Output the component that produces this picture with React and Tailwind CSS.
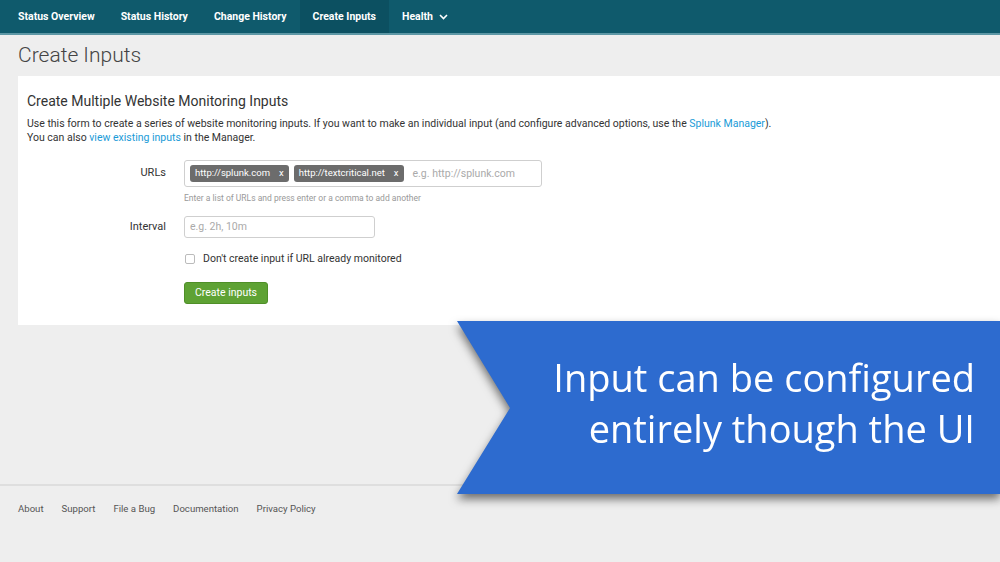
import React from "react";

export default function App() {
  const nav = ["Status Overview", "Status History", "Change History", "Create Inputs"];
  const footer = ["About", "Support", "File a Bug", "Documentation", "Privacy Policy"];
  return (
    <div className="relative w-[1000px] h-[562px] overflow-hidden bg-[#eeeeee] flex flex-col" style={{ fontFamily: "Roboto, 'Liberation Sans', sans-serif" }}>
      {/* Nav */}
      <div className="h-[35px] bg-[#0f5a6c] border-b-2 border-[#5d97a5] flex items-stretch pl-[5px] shrink-0">
        {nav.map((n) => (
          <div key={n} className={`px-[13px] flex items-center text-[10.5px] font-bold text-white ${n === "Create Inputs" ? "bg-[#0c5061]" : ""}`}>
            {n}
          </div>
        ))}
        <div className="px-[13px] flex items-center gap-[6px] text-[10.5px] font-bold text-white">
          Health
          <svg width="9" height="6" viewBox="0 0 9 6" fill="none" stroke="white" strokeWidth="1.6"><path d="M1 1l3.5 3.5L8 1" /></svg>
        </div>
      </div>

      {/* Title */}
      <div className="h-[41px] flex items-center pl-[18px] text-[21px] font-light text-[#444] shrink-0">Create Inputs</div>

      {/* Panel */}
      <div className="ml-[18px] bg-white h-[249px] pl-[9px] pt-[17px] shrink-0">
        <div className="text-[14px] text-[#333] leading-[17px]">Create Multiple Website Monitoring Inputs</div>
        <div className="mt-[7px] text-[10.5px] text-[#333] leading-[14px]">
          <div>Use this form to create a series of website monitoring inputs. If you want to make an individual input (and configure advanced options, use the <span className="text-[#1a9bd7]">Splunk Manager</span>).</div>
          <div>You can also <span className="text-[#1a9bd7]">view existing inputs</span> in the Manager.</div>
        </div>

        <div className="mt-[15px] flex">
          <div className="w-[139px] text-right text-[11px] text-[#333] pt-[5px]">URLs</div>
          <div className="ml-[18px]">
            <div className="w-[358px] h-[27px] border border-[#cfcfcf] rounded-[3px] flex items-center px-[5px] gap-[5px]">
              <span className="h-[17px] px-[5px] bg-[#6c6c6c] rounded-[3px] text-white text-[9.5px] flex items-center gap-[9px]">http://splunk.com<span>x</span></span>
              <span className="h-[17px] px-[5px] bg-[#6c6c6c] rounded-[3px] text-white text-[9.5px] flex items-center gap-[9px]">http://textcritical.net<span>x</span></span>
              <span className="ml-[4px] text-[10.5px] text-[#aaa]">e.g. http://splunk.com</span>
            </div>
            <div className="mt-[5px] text-[8.5px] text-[#999]">Enter a list of URLs and press enter or a comma to add another</div>
          </div>
        </div>

        <div className="mt-[11px] flex items-center">
          <div className="w-[139px] text-right text-[11px] text-[#333]">Interval</div>
          <div className="ml-[18px] w-[191px] h-[22px] border border-[#cfcfcf] rounded-[3px] flex items-center px-[5px] text-[10.5px] text-[#aaa]">e.g. 2h, 10m</div>
        </div>

        <div className="mt-[13px] flex items-center ml-[158px]">
          <div className="w-[10px] h-[10px] border border-[#bbb] rounded-[2px] bg-white" />
          <div className="ml-[8px] text-[10.5px] text-[#333]">Don't create input if URL already monitored</div>
        </div>

        <div className="mt-[15px] ml-[157px] w-[84px] h-[22px] rounded-[3px] bg-[#5ea234] border border-[#4f8f28] text-white text-[10.5px] flex items-center justify-center">Create inputs</div>
      </div>

      <div className="flex-1" />

      {/* Footer */}
      <div className="border-t-2 border-[#dedede] h-[78px] pl-[18px] pt-[16px] flex gap-[18px] text-[9.6px] text-[#555] shrink-0">
        {footer.map((f) => (
          <span key={f}>{f}</span>
        ))}
      </div>

      {/* Banner overlay */}
      <div className="absolute left-[457px] top-[321px] w-[543px] h-[173px] drop-shadow-[0_5px_5px_rgba(0,0,0,0.55)]">
        <div className="w-full h-full bg-[#2d6bcf] [clip-path:polygon(0_0,100%_0,100%_100%,0_100%,53px_87px)] flex flex-col items-end justify-center pr-[25px] pb-[10px] text-white text-[38px] leading-[51px]" style={{ fontFamily: "'Open Sans', 'Noto Sans', sans-serif" }}>
          <div>Input can be configured</div>
          <div>entirely though the UI</div>
        </div>
      </div>
    </div>
  );
}
